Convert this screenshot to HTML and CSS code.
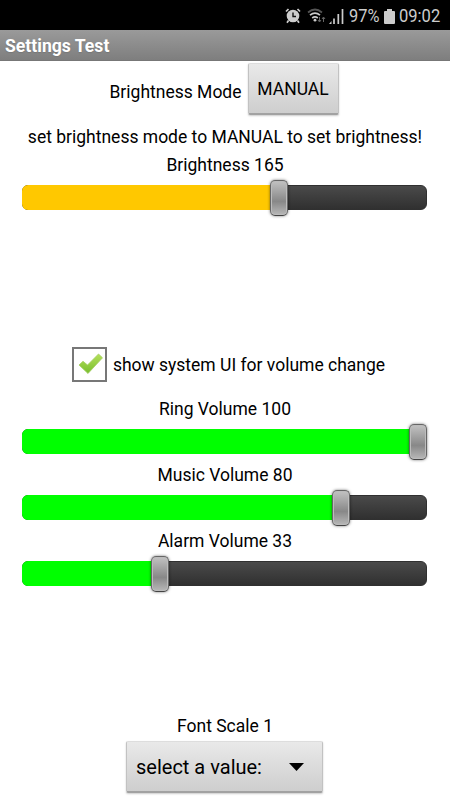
FILE: index.html
```html
<!DOCTYPE html>
<html lang="en">
<head>
<meta charset="utf-8">
<title>Settings Test</title>
<link rel="stylesheet" href="styles.css">
</head>
<body>
<div class="status">
  <svg class="alarm" width="16" height="16" viewBox="0 0 16 16"><circle cx="8" cy="8" r="6.3" fill="#ccc"/><path d="M1 3.5 3.5 1M12.5 1 15 3.5M3.5 12.5 2 14.7M12.5 12.5 14 14.7" stroke="#ccc" stroke-width="1.7"/><path d="M8 4.5V8.5H11" fill="none" stroke="#111" stroke-width="1.4"/></svg>
  <svg class="wifi" width="20" height="16" viewBox="0 0 20 16"><g fill="none" stroke-width="1.7"><path d="M1 4.5Q8 -1.5 15 4.5" stroke="#555"/><path d="M3 7.2Q8 3 13 7.2M5.2 10Q8 7.7 10.8 10" stroke="#ccc"/></g><circle cx="8" cy="12.2" r="1.4" fill="#ccc"/><path d="M12.5 9v4.5M11 12l1.5 2 1.5-2M16.5 14V9.5M15 11l1.5-2 1.5 2" fill="none" stroke="#666"/></svg>
  <svg class="signal" width="15" height="15" viewBox="0 0 15 15"><path d="M0 15 2.5 12V15Z" fill="#ccc"/><path d="M5 9.5V15M9.3 5V15M13.5 0V15" stroke="#ccc" stroke-width="1.7"/></svg>
  <span class="percent">97%</span>
  <svg class="battery" width="11" height="15" viewBox="0 0 11 15"><path d="M3 0H8V2H10Q11 2 11 3V14Q11 15 10 15H1Q0 15 0 14V3Q0 2 1 2H3Z" fill="#ccc"/></svg>
  <span class="clock">09:02</span>
</div>
<header class="title">Settings Test</header>
<main>
  <div class="mode"><span class="mode-label">Brightness Mode</span><button class="button">MANUAL</button></div>
  <p class="hint">set brightness mode to MANUAL to set brightness!</p>
  <section class="setting">
    <p class="label">Brightness 165</p>
    <div class="slider"><div class="fill amber" style="width:257px"></div><div class="thumb" style="left:247px"></div></div>
  </section>
  <div class="check-row">
    <span class="checkbox"><svg width="25" height="22" viewBox="0 0 25 22"><defs><linearGradient id="leaf" x2="0" y2="1"><stop stop-color="#b5e05a"/><stop offset="1" stop-color="#78be2e"/></linearGradient></defs><path d="M1 12 5 8.3 9.5 12 20.5 1 24.5 4.8 10 20.5Z" fill="url(#leaf)" stroke="#a3cd62" stroke-width=".8" stroke-linejoin="round"/></svg></span>
    <span class="check-label">show system UI for volume change</span>
  </div>
  <section class="setting">
    <p class="label">Ring Volume 100</p>
    <div class="slider"><div class="fill green full" style="width:405px"></div><div class="thumb" style="left:386px"></div></div>
  </section>
  <section class="setting">
    <p class="label">Music Volume 80</p>
    <div class="slider"><div class="fill green" style="width:318px"></div><div class="thumb" style="left:309px"></div></div>
  </section>
  <section class="setting">
    <p class="label">Alarm Volume 33</p>
    <div class="slider"><div class="fill green" style="width:137px"></div><div class="thumb" style="left:128px"></div></div>
  </section>
  <section class="scale">
    <p class="label">Font Scale 1</p>
    <button class="button spinner"><span class="spinner-text">select a value:</span><svg width="15" height="8" viewBox="0 0 15 8"><path d="M0 0H15L7.5 8Z"/></svg></button>
  </section>
</main>
</body>
</html>
```

FILE: styles.css
```css
* { box-sizing: border-box; }
body { margin: 0; width: 450px; height: 800px; overflow: hidden; background: #fff; color: #000; font: 17.5px/24px Roboto, sans-serif; }
p { margin: 0; }
svg { display: block; flex: none; }
.status { display: flex; align-items: center; height: 30px; padding: 2px 0 0 285px; background: #000; color: #ccc; font-size: 18px; white-space: nowrap; }
.wifi { margin-left: 6px; }
.signal { margin-left: 2px; }
.percent { width: 30px; margin-left: 5px; transform: scale(.91, 1.07); transform-origin: left; }
.battery { margin-left: 5px; }
.clock { margin-left: 4px; transform: scale(.92, 1.07); transform-origin: left; }
.title { height: 31px; padding-left: 5px; background: linear-gradient(#9a9a9a, #7e7e7e); border-bottom: 1px solid #777; color: #fff; font-size: 17.6px; font-weight: 700; line-height: 32px; text-shadow: 0 1px 1px #777; }
.mode { display: flex; justify-content: center; gap: 6px; height: 62px; padding: 2px 2px 0 0; }
.mode-label { margin-top: 17px; }
.button { display: block; width: 91px; height: 52px; padding: 1px 0 0; border: 1px solid #c2c2c2; border-top-color: #ddd; border-bottom: 2px solid #a2a2a2; border-radius: 2px; background: linear-gradient(#e9e9e9, #cecece); box-shadow: 0 1px 2px #ccc; color: #000; font: 17.5px/24px Roboto, sans-serif; }
.hint { height: 30px; line-height: 28px; text-align: center; white-space: nowrap; }
.setting { height: 66px; }
.label { text-align: center; }
.slider { position: relative; width: 405px; height: 25px; margin: 8px 0 0 22px; border: 1px solid #303030; border-radius: 6px; background: linear-gradient(#4a4a4a, #303030); }
.fill { height: 25px; margin: -1px; border-radius: 6px 0 0 6px; }
.full { border-radius: 6px; }
.amber { background: #ffc800; }
.green { background: #0f0; }
.thumb { position: absolute; top: -6px; width: 18px; height: 36px; border: 1px solid #666; border-bottom-color: #444; border-radius: 5px; background: linear-gradient(#c2c2c2, #888 60%, #b8b8b8); box-shadow: inset 0 0 0 1px #bcbcbc, 0 0 3px #0008; }
.check-row { display: flex; align-items: center; justify-content: center; gap: 6px; height: 36px; margin: 127px 0 15px; padding-left: 7px; }
.checkbox { display: flex; align-items: center; justify-content: center; width: 35px; height: 35px; padding-left: 2px; border: 2px solid #777; background: #fff; }
.check-label { margin-top: 1px; }
.scale { margin-top: 119px; }
.spinner { display: flex; align-items: center; justify-content: space-between; width: 197px; margin: 3px 0 0 126px; padding: 0 18px 0 9px; }
.spinner-text { font-size: 20px; }
```
